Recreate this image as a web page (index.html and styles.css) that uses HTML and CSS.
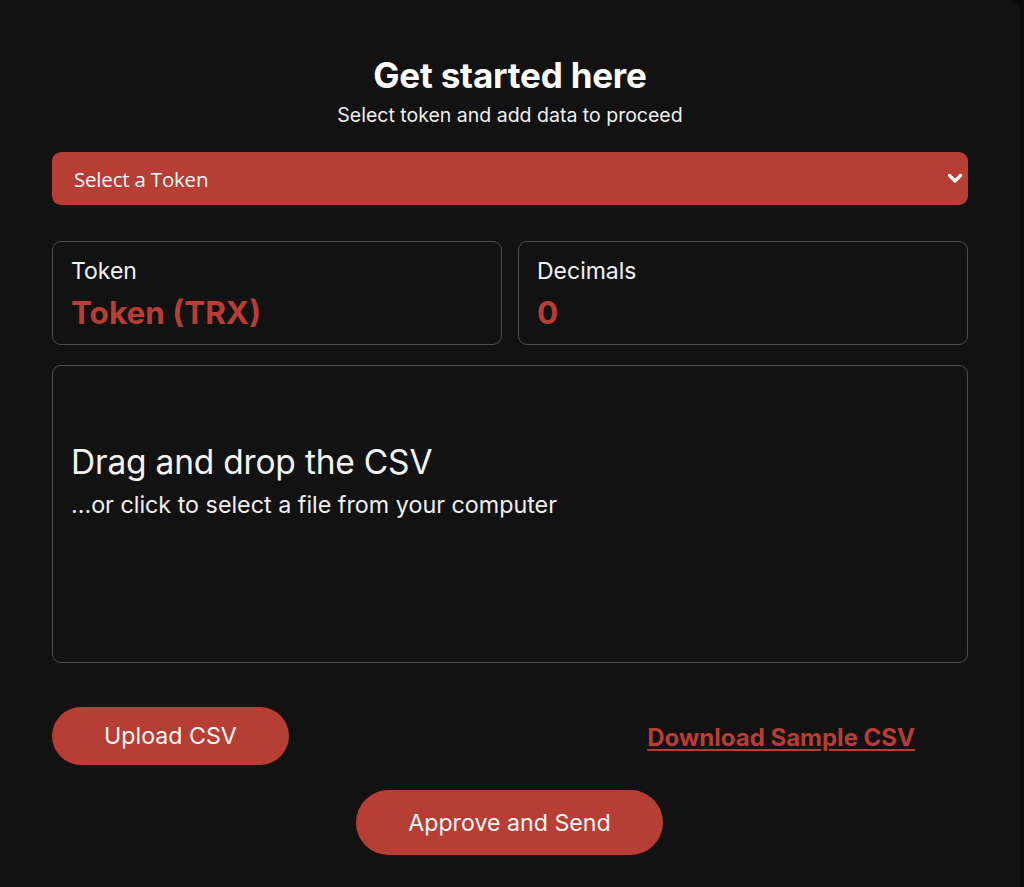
FILE: index.html
```html
<!DOCTYPE html>
<html lang="en">
<head>
<meta charset="utf-8">
<title>Get started here</title>
<link rel="stylesheet" href="styles.css">
</head>
<body>
<div class="page">
  <main class="panel">
    <header class="head">
      <h1 class="title">Get started here</h1>
      <p class="subtitle">Select token and add data to proceed</p>
    </header>
    <div class="select">
      <span class="select-text">Select a Token</span>
      <svg class="chev" width="16" height="11" viewBox="0 0 16 11"><path d="M2.5 2.5 L8 8 L13.5 2.5" fill="none" stroke="#fff" stroke-width="3.2" stroke-linecap="round" stroke-linejoin="round"/></svg>
    </div>
    <div class="cards">
      <div class="card">
        <div class="card-label">Token</div>
        <div class="card-value">Token (TRX)</div>
      </div>
      <div class="card">
        <div class="card-label">Decimals</div>
        <div class="card-value">0</div>
      </div>
    </div>
    <div class="drop">
      <div class="drop-title">Drag and drop the CSV</div>
      <div class="drop-sub">...or click to select a file from your computer</div>
    </div>
    <div class="actions">
      <button class="btn btn-upload">Upload CSV</button>
      <a class="sample" href="#">Download Sample CSV</a>
    </div>
    <div class="send-row">
      <button class="btn btn-send">Approve and Send</button>
    </div>
  </main>
  <div class="edge"></div>
</div>
</body>
</html>
```
FILE: styles.css
```css
* { box-sizing: border-box; }
html, body { margin: 0; padding: 0; background: #0b0b0b; }
body { font-family: Inter, "Noto Sans", sans-serif; color: #f2f2f2; }
.page { display: flex; height: 887px; overflow: hidden; }
.panel {
  width: 1020px;
  background: #121212;
  border-top-right-radius: 10px;
  padding: 55px 52px 0 52px;
  display: flex;
  flex-direction: column;
}
.edge { flex: 1; background: #0b0b0b; }
.head { text-align: center; padding-left: 0; }
.title { margin: 0; font-size: 35px; font-weight: 700; line-height: 40px; color: #fff; letter-spacing: -0.2px; }
.subtitle { margin: 8px 0 0; font-size: 19.5px; line-height: 24px; color: #f0f0f0; }
.select {
  margin-top: 25px;
  height: 53px;
  background: #b73e34;
  border-radius: 9px;
  display: flex;
  align-items: center;
  justify-content: space-between;
  padding: 0 5px 0 22px;
}
.select-text { font-family: "Open Sans", sans-serif; font-size: 20.5px; color: #f6f6f6; letter-spacing: -0.2px; }
.chev { display: block; }
.cards { margin-top: 36px; display: grid; grid-template-columns: 1fr 1fr; gap: 16px; }
.card {
  height: 104px;
  border: 1.5px solid #4d4d4d;
  border-radius: 9px;
  padding: 14px 18px 0;
}
.card-label { font-size: 23px; line-height: 30px; color: #f2f2f2; }
.card-value { margin-top: 8px; font-size: 31.5px; font-weight: 700; line-height: 38px; color: #b73e34; }
.drop {
  margin-top: 20px;
  height: 298px;
  border: 1.5px solid #4d4d4d;
  border-radius: 9px;
  padding: 75px 18px 0;
}
.drop-title { font-size: 33.5px; line-height: 42px; color: #f4f4f4; letter-spacing: -0.2px; }
.drop-sub { margin-top: 7px; font-size: 23.3px; line-height: 30px; color: #f0f0f0; }
.actions {
  margin-top: 44px;
  display: flex;
  align-items: center;
  justify-content: space-between;
  padding-right: 53px;
}
.btn {
  border: none;
  background: #b73e34;
  color: #f6f6f6;
  font-family: Inter, "Noto Sans", sans-serif;
  font-size: 23.2px;
  border-radius: 40px;
  cursor: pointer;
}
.btn-upload { width: 237px; height: 58px; }
.sample { font-size: 24px; font-weight: 700; color: #b73e34; text-decoration: underline; text-underline-offset: 3px; margin-top: 2px; }
.send-row { margin-top: 25px; display: flex; justify-content: center; padding-right: 1px; }
.btn-send { width: 307px; height: 65px; }
```
